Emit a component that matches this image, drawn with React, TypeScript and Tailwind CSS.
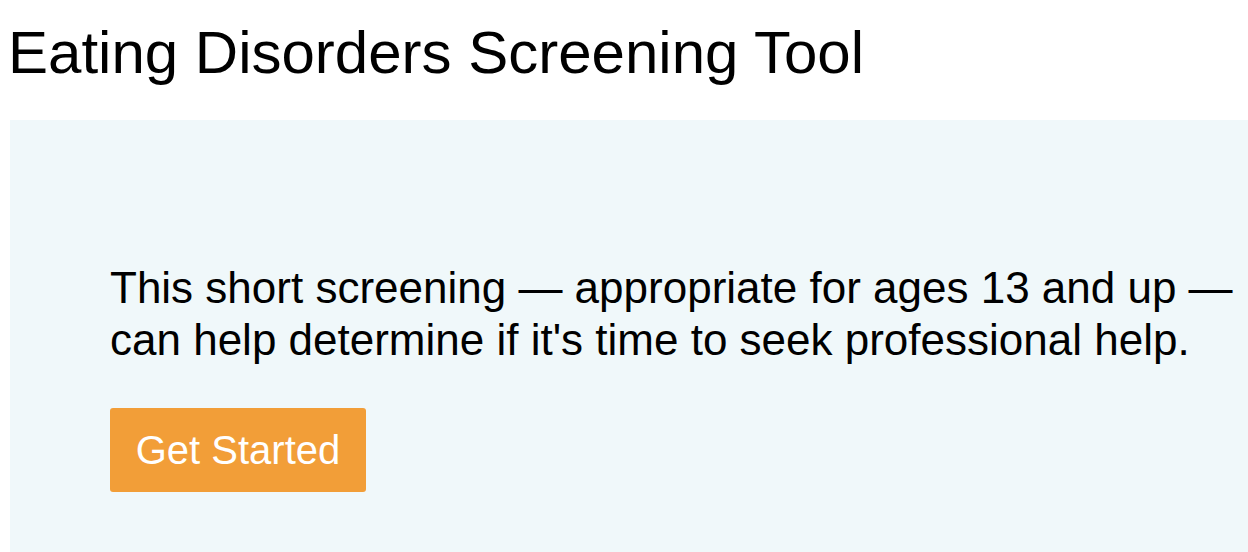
export default function App() {
    return (
        <div className="min-h-screen bg-white font-['Liberation_Sans',Arial,sans-serif] text-black">
            <h1 className="ml-[8px] mt-[18px] mb-[33px] text-[60px] leading-[69px] font-normal">
                Eating Disorders Screening Tool
            </h1>
            <div className="ml-[10px] bg-[#f0f8fa] pl-[100px] pt-[142px] pb-[60px]">
                <p className="text-[44px] leading-[52px]">
                    This short screening — appropriate for ages 13 and up —<br />
                    can help determine if it's time to seek professional help.
                </p>
                <button className="mt-[42px] h-[84px] w-[256px] rounded-[3px] bg-[#f29e38] text-[40px] leading-[46px] text-white">
                    Get Started
                </button>
            </div>
        </div>
    );
}
